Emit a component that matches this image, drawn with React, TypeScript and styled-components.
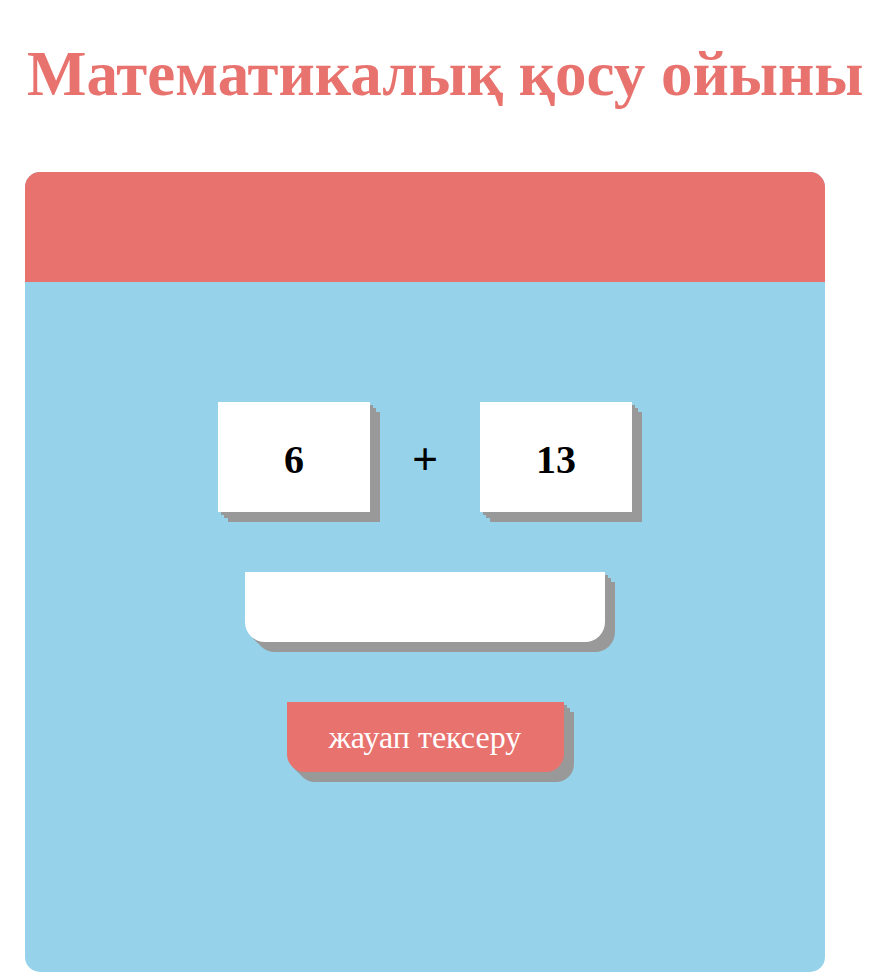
import React from 'react';
import styled, { createGlobalStyle } from 'styled-components';

const GlobalStyle = createGlobalStyle`
  body {
    margin: 0;
    background: #fff;
    font-family: "Liberation Serif", "Times New Roman", serif;
  }
`;

const Page = styled.div`
  padding: 0 25px;
`;

const Title = styled.h1`
  margin: 0;
  padding: 38px 0 62px 2px;
  font-size: 63px;
  line-height: 72px;
  font-weight: bold;
  color: #e8726e;
  white-space: nowrap;
`;

const Card = styled.div`
  width: 800px;
  height: 800px;
  border-radius: 15px;
  overflow: hidden;
  background: #96d3eb;
  display: flex;
  flex-direction: column;
`;

const CardHeader = styled.div`
  height: 110px;
  background: #e8726e;
`;

const CardBody = styled.div`
  flex: 1;
  padding-top: 120px;
  display: flex;
  flex-direction: column;
  align-items: center;
  gap: 60px;
`;

const stackedShadow = `
  box-shadow: 3px 3px 0 #999, 6px 6px 0 #999, 10px 10px 0 #999;
`;

const Sum = styled.div`
  display: flex;
  align-items: center;
`;

const NumberBox = styled.div`
  width: 152px;
  height: 110px;
  box-sizing: border-box;
  padding-top: 4px;
  background: #fff;
  display: flex;
  align-items: center;
  justify-content: center;
  font-size: 40px;
  font-weight: bold;
  color: #000;
  ${stackedShadow}
`;

const Plus = styled.span`
  width: 110px;
  padding-top: 4px;
  text-align: center;
  font-size: 46px;
  font-weight: bold;
  color: #000;
`;

const AnswerInput = styled.input`
  width: 360px;
  height: 70px;
  box-sizing: border-box;
  border: none;
  outline: none;
  background: #fff;
  border-radius: 0 0 20px 20px;
  font-family: inherit;
  font-size: 28px;
  text-align: center;
  ${stackedShadow}
`;

const CheckButton = styled.button`
  width: 277px;
  height: 70px;
  border: none;
  background: #e8726e;
  color: #fff;
  border-radius: 0 0 18px 18px;
  font-family: "Liberation Serif", "Times New Roman", serif;
  font-size: 32px;
  cursor: pointer;
  ${stackedShadow}
`;

const App: React.FC = () => {
  return (
    <>
      <GlobalStyle />
      <Page>
        <Title>Математикалық қосу ойыны</Title>
        <Card>
          <CardHeader />
          <CardBody>
            <Sum>
              <NumberBox>6</NumberBox>
              <Plus>+</Plus>
              <NumberBox>13</NumberBox>
            </Sum>
            <AnswerInput type="text" />
            <CheckButton>жауап тексеру</CheckButton>
          </CardBody>
        </Card>
      </Page>
    </>
  );
};

export default App;
